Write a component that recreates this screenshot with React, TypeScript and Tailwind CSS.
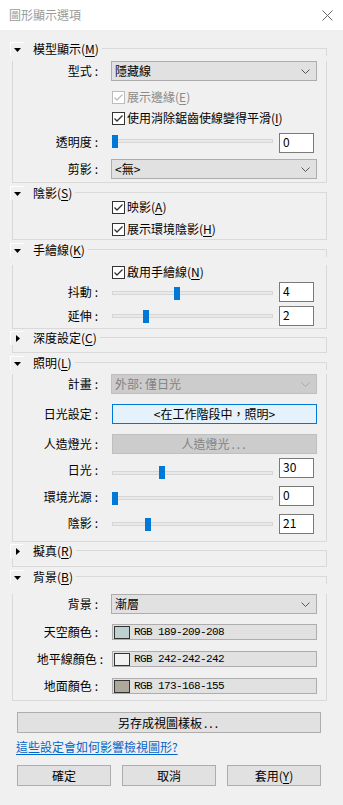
import React from 'react';

const line = 'border-[#d9d9d9]';

const Chevron = ({ color = '#555' }: { color?: string }) => (
  <svg width="9" height="5" viewBox="0 0 9 5" className="shrink-0">
    <path d="M0.5 0.5 L4.5 4.5 L8.5 0.5" fill="none" stroke={color} strokeWidth="1" />
  </svg>
);

const Hot = ({ c }: { c: string }) => (
  <>
    (<span className="underline underline-offset-2">{c}</span>)
  </>
);

// group box with expander + title line
const Section = ({
  title,
  hot,
  open = true,
  className = '',
  children,
}: {
  title: string;
  hot: string;
  open?: boolean;
  className?: string;
  children?: React.ReactNode;
}) => (
  <div className={className}>
    <div className="flex h-[14px] items-center ml-[-2px]">
      <div className="w-[14px] h-[14px] shrink-0 border-t border-l border-white flex items-center justify-center">
        {open ? (
          <svg width="7" height="4" viewBox="0 0 7 4">
            <path d="M0 0 H7 L3.5 4 Z" fill="#000" />
          </svg>
        ) : (
          <svg width="4" height="7" viewBox="0 0 4 7">
            <path d="M0 0 V7 L4 3.5 Z" fill="#000" />
          </svg>
        )}
      </div>
      <span className="ml-[9px] whitespace-nowrap">
        {title}
        <Hot c={hot} />
      </span>
      <div className={`flex-1 self-end h-[8px] ml-[3px] border-t border-r ${line}`} />
    </div>
    <div className={`border-x border-b ${line}`}>{children}</div>
  </div>
);

const Row = ({
  label,
  className = '',
  labelClass = 'w-[85px]',
  children,
}: {
  label?: string;
  className?: string;
  labelClass?: string;
  children: React.ReactNode;
}) => (
  <div className={`flex items-center ${className}`}>
    <div className={`shrink-0 text-right whitespace-nowrap ${labelClass}`}>
      {label && (
        <>
          {label}
          <span className="ml-[3px]">:</span>
        </>
      )}
    </div>
    <div className="ml-[13px] flex items-center">{children}</div>
  </div>
);

const Select = ({ value, disabled = false }: { value: string; disabled?: boolean }) => (
  <div
    className={`w-[206px] h-[20px] border flex items-center pl-[3px] pr-[6px] ${
      disabled ? 'bg-[#cccccc] border-[#bfbfbf] text-[#838383]' : 'bg-[#e1e1e1] border-[#adadad]'
    }`}
  >
    <span className="flex-1">{value}</span>
    <Chevron color={disabled ? '#a8a8a8' : '#555'} />
  </div>
);

const Check = ({ text, hot, disabled = false }: { text: string; hot: string; disabled?: boolean }) => (
  <div className="flex items-center ml-px">
    <div
      className={`w-[13px] h-[13px] border bg-white flex items-center justify-center ${
        disabled ? 'border-[#bcbcbc]' : 'border-[#333333]'
      }`}
    >
      <svg width="11" height="11" viewBox="0 0 11 11">
        <path
          d="M1.5 5.5 L4 8 L9.5 2.5"
          fill="none"
          stroke={disabled ? '#bcbcbc' : '#333'}
          strokeWidth="1.3"
        />
      </svg>
    </div>
    <span className={`ml-[2px] ${disabled ? 'text-[#8a8a8a]' : ''}`}>
      {text}
      <Hot c={hot} />
    </span>
  </div>
);

const Slider = ({ value, max, className = '' }: { value: number; max: number; className?: string }) => (
  <div className={`relative w-[161px] h-[13px] flex items-center ml-px ${className}`}>
    <div className="w-full h-[4px] bg-[#e7eaea] border border-[#d6d6d6]" />
    <div
      className="absolute top-0 w-[6px] h-[13px] bg-[#0078d7]"
      style={{ left: `${(value / max) * 155}px` }}
    />
  </div>
);

const NumBox = ({ v }: { v: string }) => (
  <div className="w-[35px] h-[20px] ml-[6px] border border-[#7a7a7a] bg-white pl-[3px] pt-px leading-[14px]">
    {v}
  </div>
);

const ColorField = ({ rgb, c }: { rgb: string; c: string }) => (
  <div className="w-[205px] h-[16px] ml-px bg-[#e1e1e1] border border-[#adadad] flex items-center">
    <div className="w-[16px] h-[13px] ml-px border border-[#333]" style={{ background: c }} />
    <span className="ml-[4px] font-['Liberation_Mono',monospace] text-[11px] tracking-[-0.6px]">
      RGB {rgb}
    </span>
  </div>
);

const Btn = ({ children, className = '' }: { children: React.ReactNode; className?: string }) => (
  <div
    className={`h-[21px] bg-[#e1e1e1] border border-[#adadad] flex items-center justify-center ${className}`}
  >
    {children}
  </div>
);

export default function App() {
  return (
    <div className="w-[343px] h-[805px] bg-[#f0f0f0] text-[12px] leading-[14px] text-black font-['Noto_Sans_CJK_TC','Noto_Sans',sans-serif] overflow-hidden">
      {/* Title bar */}
      <div className="h-[30px] bg-white flex items-center justify-between pl-[9px] pr-[10px]">
        <span className="text-[#9a9a9a]">圖形顯示選項</span>
        <svg width="11" height="11" viewBox="0 0 11 11">
          <path d="M0.5 0.5 L10.5 10.5 M10.5 0.5 L0.5 10.5" stroke="#666" strokeWidth="1" />
        </svg>
      </div>

      <div className="pl-[12px] pr-[16px]">
        {/* Model display */}
        <Section title="模型顯示" hot="M" className="mt-[12px]">
          <Row label="型式" className="mt-[5px] h-[20px]">
            <Select value="隱藏線" />
          </Row>
          <Row className="mt-[9px] h-[14px]">
            <Check text="展示邊緣" hot="E" disabled />
          </Row>
          <Row className="mt-[7px] h-[14px]">
            <Check text="使用消除鋸齒使線變得平滑" hot="I" />
          </Row>
          <Row label="透明度" className="mt-[8px] h-[20px]" labelClass="w-[85px] mb-[3px]">
            <Slider value={0} max={100} className="mb-[4px]" />
            <NumBox v="0" />
          </Row>
          <Row label="剪影" className="mt-[6px] h-[20px]">
            <Select value="<無>" />
          </Row>
          <div className="h-[3px]" />
        </Section>

        {/* Shadows */}
        <Section title="陰影" hot="S" className="mt-[3px]">
          <Row className="h-[14px]">
            <Check text="映影" hot="A" />
          </Row>
          <Row className="mt-[8px] h-[14px]">
            <Check text="展示環境陰影" hot="H" />
          </Row>
          <div className="h-[3px]" />
        </Section>

        {/* Sketchy lines */}
        <Section title="手繪線" hot="K" className="mt-[3px]">
          <Row className="mt-[8px] h-[14px]">
            <Check text="啟用手繪線" hot="N" />
          </Row>
          <Row label="抖動" className="mt-[3px] h-[20px]">
            <Slider value={4} max={10} className="mt-[2px]" />
            <NumBox v="4" />
          </Row>
          <Row label="延伸" className="mt-[4px] h-[20px]">
            <Slider value={2} max={10} />
            <NumBox v="2" />
          </Row>
          <div className="h-[2px]" />
        </Section>

        {/* Depth cueing */}
        <Section title="深度設定" hot="C" open={false} className="mt-[2px]">
          <div className="h-[7px]" />
        </Section>

        {/* Lighting */}
        <Section title="照明" hot="L" className="mt-[3px]">
          <Row label="計畫" className="mt-[4px] h-[20px]">
            <Select value="外部: 僅日光" disabled />
          </Row>
          <Row label="日光設定" className="mt-[10px] h-[20px]">
            <div className="w-[205px] h-[20px] ml-px bg-[#e5f1fb] border border-[#0078d7] flex items-center justify-center">
              &lt;在工作階段中，照明&gt;
            </div>
          </Row>
          <Row label="人造燈光" className="mt-[10px] h-[20px]">
            <div className="w-[205px] h-[20px] ml-px bg-[#cccccc] border border-[#bfbfbf] text-[#838383] flex items-center justify-center">
              人造燈光<span className="tracking-[2px] ml-[2px]">...</span>
            </div>
          </Row>
          <Row label="日光" className="mt-[4px] h-[20px]" labelClass="w-[85px] mt-[4px]">
            <Slider value={30} max={100} className="mt-[9px]" />
            <NumBox v="30" />
          </Row>
          <Row label="環境光源" className="mt-[8px] h-[20px]" labelClass="w-[85px] mt-[2px]">
            <Slider value={0} max={100} className="mt-[4px]" />
            <NumBox v="0" />
          </Row>
          <Row label="陰影" className="mt-[8px] h-[20px]" labelClass="w-[85px] mb-[2px]">
            <Slider value={21} max={100} />
            <NumBox v="21" />
          </Row>
          <div className="h-[7px]" />
        </Section>

        {/* Photographic exposure */}
        <Section title="擬真" hot="R" open={false} className="mt-[2px]">
          <div className="h-[8px]" />
        </Section>

        {/* Background */}
        <Section title="背景" hot="B" className="mt-[3px]">
          <Row label="背景" className="mt-[10px] h-[20px]">
            <Select value="漸層" />
          </Row>
          <Row label="天空顏色" className="mt-[10px] h-[16px]">
            <ColorField rgb="189-209-208" c="rgb(189,209,208)" />
          </Row>
          <Row label="地平線顏色" className="mt-[11px] h-[16px]" labelClass="w-[90px] mr-[-5px]">
            <ColorField rgb="242-242-242" c="rgb(242,242,242)" />
          </Row>
          <Row label="地面顏色" className="mt-[11px] h-[16px]">
            <ColorField rgb="173-168-155" c="rgb(173,168,155)" />
          </Row>
          <div className="h-[6px]" />
        </Section>

        <Btn className="mt-[11px] ml-[5px] w-[304px]">
          另存成視圖樣板<span className="tracking-[2px] ml-[2px]">...</span>
        </Btn>

        <div className="mt-[7px] ml-[4px] text-[#0066cc] underline underline-offset-2 whitespace-nowrap">
          這些設定會如何影響檢視圖形?
        </div>

        <div className="mt-[11px] ml-[5px] flex gap-[11px]">
          <Btn className="w-[94px]">確定</Btn>
          <Btn className="w-[94px]">取消</Btn>
          <Btn className="w-[94px]">
            套用
            <Hot c="Y" />
          </Btn>
        </div>
      </div>
    </div>
  );
}
